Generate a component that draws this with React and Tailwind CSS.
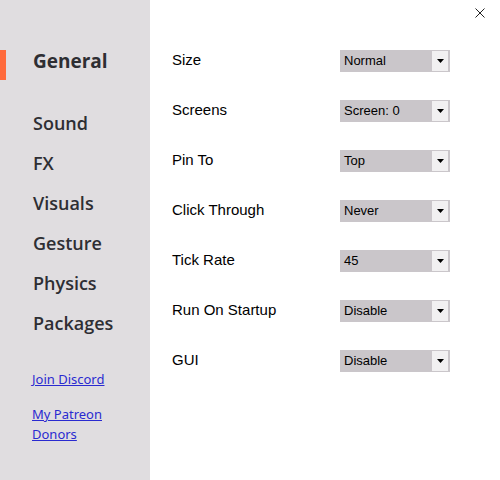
const rows = [
  { label: "Size", value: "Normal" },
  { label: "Screens", value: "Screen: 0" },
  { label: "Pin To", value: "Top" },
  { label: "Click Through", value: "Never" },
  { label: "Tick Rate", value: "45" },
  { label: "Run On Startup", value: "Disable" },
  { label: "GUI", value: "Disable" },
];

const nav = ["Sound", "FX", "Visuals", "Gesture", "Physics", "Packages"];

function Select({ value }) {
  return (
    <div className="w-[110px] h-[22px] bg-[#cac6ca] flex items-center justify-between pl-[4px] pr-[2px]">
      <span className="text-[13px] text-black font-['Liberation_Sans',Arial,sans-serif]">{value}</span>
      <span className="w-[16px] h-[20px] bg-[#f1f0f1] flex items-center justify-center">
        <svg width="7" height="4" viewBox="0 0 7 4">
          <path d="M0 0h7L3.5 4z" fill="#000" />
        </svg>
      </span>
    </div>
  );
}

export default function App() {
  return (
    <div className="w-[500px] h-[480px] flex bg-white relative overflow-hidden">
      <aside className="w-[150px] h-full bg-[#e0dde0] flex flex-col font-['Open_Sans','Noto_Sans',sans-serif] text-[#2e2e33]">
        <div className="mt-[50px] h-[30px] flex items-center">
          <div className="w-[6px] h-[30px] bg-[#ff6a3c]" />
          <span className="ml-[27px] pb-[7px] text-[19px] font-bold">General</span>
        </div>
        <div className="mt-[29px] flex flex-col gap-[12px]">
          {nav.map((n) => (
            <span key={n} className="ml-[33px] h-[28px] leading-[28px] text-[18px] font-semibold">
              {n}
            </span>
          ))}
        </div>
        <div className="mt-[32px] ml-[32px] w-[90px] flex flex-col text-[13px] leading-[20px] font-['Noto_Sans',sans-serif] text-[#2a2ad0]">
          <a href="#" className="underline">Join Discord</a>
          <a href="#" className="underline mt-[15px]">My Patreon Donors</a>
        </div>
      </aside>
      <main className="flex-1 pt-[50px] pl-[22px] flex flex-col gap-[28px] font-['Liberation_Sans',Arial,sans-serif]">
        {rows.map((r) => (
          <div key={r.label} className="flex items-center h-[22px]">
            <span className="w-[168px] text-[15px] text-black pb-[2px]">{r.label}</span>
            <Select value={r.value} />
          </div>
        ))}
      </main>
      <button className="absolute top-[8px] right-[15px] w-[10px] h-[10px]">
        <svg width="10" height="10" viewBox="0 0 10 10">
          <path d="M0.5 0.5L9.5 9.5M9.5 0.5L0.5 9.5" stroke="#222" strokeWidth="1" />
        </svg>
      </button>
    </div>
  );
}
